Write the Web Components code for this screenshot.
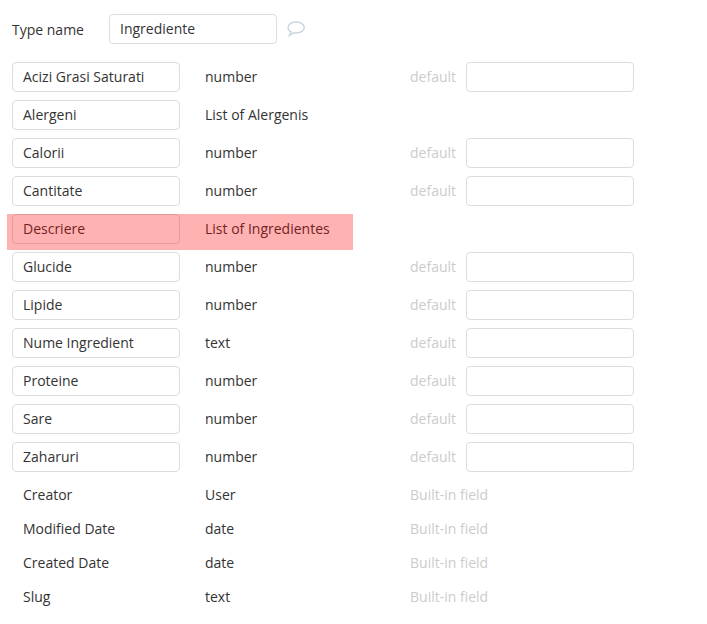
<!DOCTYPE html>
<html>
<head>
<meta charset="utf-8">
<style>
	html, body { margin: 0; background: #fff; }
	body { font: 14px "Open Sans", sans-serif; color: #333; }
	type-editor { width: 707px; height: 624px; }
</style>
</head>
<body>
<type-editor name="Ingrediente">
	<field-row name="Acizi Grasi Saturati" type="number" default></field-row>
	<field-row name="Alergeni" type="List of Alergenis"></field-row>
	<field-row name="Calorii" type="number" default></field-row>
	<field-row name="Cantitate" type="number" default></field-row>
	<field-row name="Descriere" type="List of Ingredientes" highlight></field-row>
	<field-row name="Glucide" type="number" default></field-row>
	<field-row name="Lipide" type="number" default></field-row>
	<field-row name="Nume Ingredient" type="text" default></field-row>
	<field-row name="Proteine" type="number" default></field-row>
	<field-row name="Sare" type="number" default></field-row>
	<field-row name="Zaharuri" type="number" default></field-row>
	<builtin-row slot="builtin" name="Creator" type="User"></builtin-row>
	<builtin-row slot="builtin" name="Modified Date" type="date"></builtin-row>
	<builtin-row slot="builtin" name="Created Date" type="date"></builtin-row>
	<builtin-row slot="builtin" name="Slug" type="text"></builtin-row>
</type-editor>

<script>
(function() {
	"use strict";

	const boxCss = `
		.box {
			box-sizing: border-box;
			width: 168px;
			height: 30px;
			padding: 0 10px;
			border: 1px solid #ddd;
			border-radius: 4px;
			background: #fff;
			line-height: 28px;
			white-space: nowrap;
		}
	`;

	class TypeEditor extends HTMLElement {
		constructor() {
			super();
			this.attachShadow({ mode: "open" });
		}

		connectedCallback() {
			this.shadowRoot.innerHTML = `
				<style>
					:host {
						display: block;
						box-sizing: border-box;
						padding: 14px 0 0 12px;
						font: 14px "Open Sans", sans-serif;
						color: #333;
					}
					${boxCss}
					header {
						display: flex;
						align-items: center;
						height: 30px;
						margin-bottom: 18px;
					}
					.label { width: 97px; }
					svg { display: block; margin-left: 10px; }
					.rows { display: flex; flex-direction: column; gap: 8px; }
					.builtin { display: flex; flex-direction: column; margin-top: 6px; }
				</style>
				<header>
					<span class="label">Type name</span>
					<div class="box">${this.getAttribute("name")}</div>
					<svg width="20" height="18" viewBox="0 0 20 18" fill="none" stroke="#c5d5dc" stroke-width="1.3">
						<path d="M9.200 2C4.700 2 1 4.400 1 7.500c0 1.800 1.200 3.300 3.200 4.300L2.300 15.600l4.400-2.800c.8.200 1.600.2 2.500.2 4.500 0 8.100-2.400 8.100-5.500S13.700 2 9.200 2z"/>
					</svg>
				</header>
				<div class="rows"><slot></slot></div>
				<div class="builtin"><slot name="builtin"></slot></div>
			`;
		}
	}

	class FieldRow extends HTMLElement {
		constructor() {
			super();
			this.attachShadow({ mode: "open" });
		}

		connectedCallback() {
			let hasDefault = this.hasAttribute("default");
			this.shadowRoot.innerHTML = `
				<style>
					:host {
						display: flex;
						position: relative;
						height: 30px;
					}
					${boxCss}
					.type, .default { line-height: 30px; white-space: nowrap; }
					.type { width: 205px; margin-left: 25px; }
					.default { width: 56px; color: #ccc; }
					:host([highlight])::after {
						content: "";
						position: absolute;
						top: 0;
						left: -5px;
						width: 346px;
						height: 36px;
						background: rgba(255, 0, 0, .3);
					}
				</style>
				<div class="box">${this.getAttribute("name")}</div>
				<span class="type">${this.getAttribute("type")}</span>
				${hasDefault ? '<span class="default">default</span><div class="box"></div>' : ""}
			`;
		}
	}

	class BuiltinRow extends HTMLElement {
		constructor() {
			super();
			this.attachShadow({ mode: "open" });
		}

		connectedCallback() {
			this.shadowRoot.innerHTML = `
				<style>
					:host {
						display: flex;
						height: 34px;
						padding-left: 11px;
						line-height: 34px;
						white-space: nowrap;
					}
					.name { width: 182px; }
					.type { width: 205px; }
					.note { color: #ccc; }
				</style>
				<span class="name">${this.getAttribute("name")}</span>
				<span class="type">${this.getAttribute("type")}</span>
				<span class="note">Built-in field</span>
			`;
		}
	}

	customElements.define("type-editor", TypeEditor);
	customElements.define("field-row", FieldRow);
	customElements.define("builtin-row", BuiltinRow);
})();
</script>
</body>
</html>
